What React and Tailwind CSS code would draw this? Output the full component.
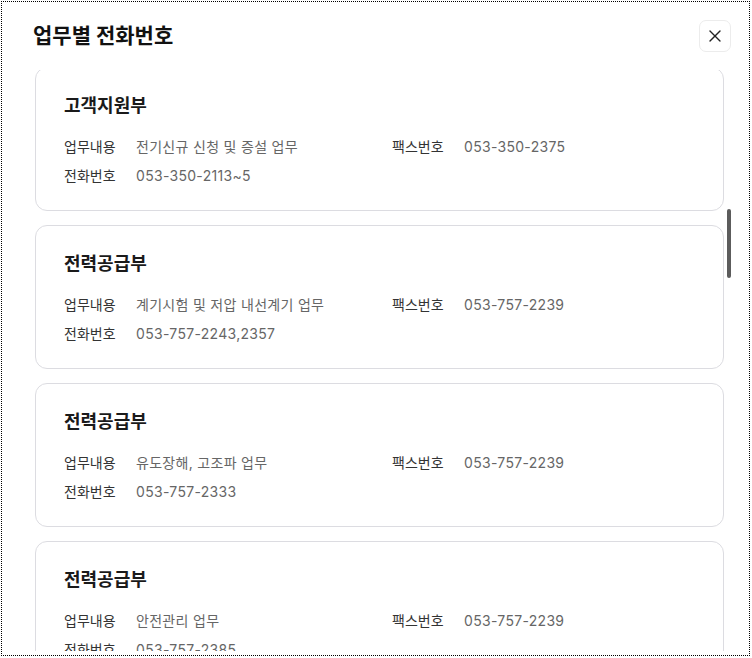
import React, { useLayoutEffect, useRef } from 'react';
import { X } from 'lucide-react';

const before = [
  { dept: '고객지원부', task: '전기요금 문의 및 납부 업무', tel: '053-350-2101', fax: '053-350-2375' },
  { dept: '고객지원부', task: '명의변경 및 계약변경 업무', tel: '053-350-2104', fax: '053-350-2375' },
  { dept: '고객지원부', task: '이사정산 및 해지 업무', tel: '053-350-2106', fax: '053-350-2375' },
  { dept: '고객지원부', task: '복지할인 및 요금감면 업무', tel: '053-350-2107', fax: '053-350-2375' },
  { dept: '고객지원부', task: '계량기 검침 업무', tel: '053-350-2108', fax: '053-350-2375' },
  { dept: '고객지원부', task: '미수요금 관리 업무', tel: '053-350-2109', fax: '053-350-2375' },
  { dept: '고객지원부', task: '전기사용 신청 업무', tel: '053-350-2110', fax: '053-350-2375' },
  { dept: '고객지원부', task: '임시전력 신청 업무', tel: '053-350-2111', fax: '053-350-2375' },
];

const visible = [
  { dept: '고객지원부', task: '전기신규 신청 및 증설 업무', tel: '053-350-2113~5', fax: '053-350-2375' },
  { dept: '전력공급부', task: '계기시험 및 저압 내선계기 업무', tel: '053-757-2243,2357', fax: '053-757-2239' },
  { dept: '전력공급부', task: '유도장해, 고조파 업무', tel: '053-757-2333', fax: '053-757-2239' },
  { dept: '전력공급부', task: '안전관리 업무', tel: '053-757-2385', fax: '053-757-2239' },
];

const after = Array.from({ length: 21 }, (_, i) => ({
  dept: i < 11 ? '전력공급부' : '배전운영부',
  task: i < 11 ? '배전선로 유지보수 업무' : '정전 및 고장 접수 업무',
  tel: `053-757-${2400 + i}`,
  fax: '053-757-2239',
}));

const items = [...before, ...visible, ...after];

const Row = ({ label, value }) => (
  <div className="flex leading-[21px] text-[14px]">
    <span className="w-[72px] shrink-0 text-[#333333]">{label}</span>
    <span className="tracking-[0.3px] text-[#666666]">{value}</span>
  </div>
);

const Card = ({ item }) => (
  <div className="rounded-[12px] border border-[#dcdce1] bg-white px-[28px] pt-6 pb-6">
    <h3 className="text-[18px] leading-[27px] font-bold text-[#1a1a1a]">{item.dept}</h3>
    <div className="mt-[17px] flex">
      <div className="w-[328px] shrink-0 flex flex-col gap-2">
        <Row label="업무내용" value={item.task} />
        <Row label="전화번호" value={item.tel} />
      </div>
      <div className="flex flex-col gap-2">
        <Row label="팩스번호" value={item.fax} />
      </div>
    </div>
  </div>
);

export default function App() {
  const listRef = useRef(null);

  useLayoutEffect(() => {
    if (listRef.current) listRef.current.scrollTop = 8 * 158 + 3;
  }, []);

  return (
    <div
      className="w-[752px] h-[658px] bg-white p-px"
      style={{ fontFamily: 'Inter, "Noto Sans CJK KR", sans-serif' }}
    >
      <div className="flex h-[655px] w-[749px] flex-col border border-dotted border-black">
        <div className="flex h-[68px] shrink-0 items-center justify-between pl-[31px] pr-[18px]">
          <h2 className="text-[21px] font-bold text-[#111111]">업무별 전화번호</h2>
          <button className="flex h-8 w-8 items-center justify-center rounded-[7px] border border-[#ececec] bg-white text-[#222222]">
            <X size={20} strokeWidth={1.6} />
          </button>
        </div>
        <div className="relative ml-[33px] mr-[18px] mb-[4px] min-h-0 flex-1">
          <div
            ref={listRef}
            className="h-full overflow-y-auto pr-[7px] [scrollbar-width:none]"
          >
            <div className="flex flex-col gap-[14px]">
              {items.map((item, index) => (
                <Card key={index} item={item} />
              ))}
            </div>
          </div>
          {/* scrollbar thumb */}
          <div className="absolute right-0 top-[139px] h-[69px] w-[4px] rounded-full bg-[#5c5c5c]" />
        </div>
      </div>
    </div>
  );
}
